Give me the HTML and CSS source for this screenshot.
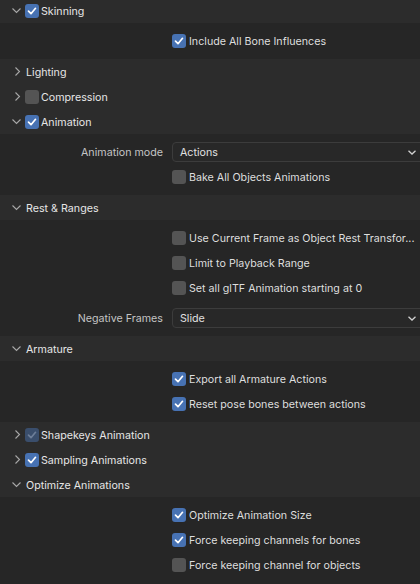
FILE: index.html
```html
<!DOCTYPE html>
<html>
<head>
<meta charset="utf-8">
<link rel="stylesheet" href="styles.css">
</head>
<body>
<div class="panel">
  <div class="hdr">
    <svg class="chev" width="14" height="25"><path d="M1.5 10.5 L5.5 14.5 L9.5 10.5"/></svg>
    <span class="cb on"><svg width="14" height="14"><path d="M3.5 7.2 L6 9.7 L10.5 4.3"/></svg></span>
    <span class="ht">Skinning</span>
  </div>
  <div class="body">
    <div class="row"><div class="lab"></div><label class="opt"><span class="cb on"><svg width="14" height="14"><path d="M3.5 7.2 L6 9.7 L10.5 4.3"/></svg></span>Include All Bone Influences</label></div>
  </div>

  <div class="hdr closed">
    <svg class="chev" width="14" height="25"><path d="M4.5 8.5 L8.5 12.5 L4.5 16.5"/></svg>
    <span class="ht plain">Lighting</span>
  </div>
  <div class="hdr closed">
    <svg class="chev" width="14" height="25"><path d="M4.5 8.5 L8.5 12.5 L4.5 16.5"/></svg>
    <span class="cb"></span>
    <span class="ht">Compression</span>
  </div>

  <div class="hdr">
    <svg class="chev" width="14" height="25"><path d="M1.5 10.5 L5.5 14.5 L9.5 10.5"/></svg>
    <span class="cb on"><svg width="14" height="14"><path d="M3.5 7.2 L6 9.7 L10.5 4.3"/></svg></span>
    <span class="ht">Animation</span>
  </div>
  <div class="body">
    <div class="row"><div class="lab">Animation mode</div><div class="drop"><span>Actions</span><svg width="8" height="5"><path d="M0.5 0.8 L4 4 L7.5 0.8"/></svg></div></div>
    <div class="row"><div class="lab"></div><label class="opt"><span class="cb"></span>Bake All Objects Animations</label></div>
  </div>

  <div class="hdr">
    <svg class="chev" width="14" height="25"><path d="M1.5 10.5 L5.5 14.5 L9.5 10.5"/></svg>
    <span class="ht plain">Rest &amp; Ranges</span>
  </div>
  <div class="body">
    <div class="row"><div class="lab"></div><label class="opt"><span class="cb"></span>Use Current Frame as Object Rest Transfor...</label></div>
    <div class="row"><div class="lab"></div><label class="opt"><span class="cb"></span>Limit to Playback Range</label></div>
    <div class="row"><div class="lab"></div><label class="opt"><span class="cb"></span>Set all glTF Animation starting at 0</label></div>
    <div class="row sep"><div class="lab">Negative Frames</div><div class="drop"><span>Slide</span><svg width="8" height="5"><path d="M0.5 0.8 L4 4 L7.5 0.8"/></svg></div></div>
  </div>

  <div class="hdr">
    <svg class="chev" width="14" height="25"><path d="M1.5 10.5 L5.5 14.5 L9.5 10.5"/></svg>
    <span class="ht plain">Armature</span>
  </div>
  <div class="body">
    <div class="row"><div class="lab"></div><label class="opt"><span class="cb on"><svg width="14" height="14"><path d="M3.5 7.2 L6 9.7 L10.5 4.3"/></svg></span>Export all Armature Actions</label></div>
    <div class="row"><div class="lab"></div><label class="opt"><span class="cb on"><svg width="14" height="14"><path d="M3.5 7.2 L6 9.7 L10.5 4.3"/></svg></span>Reset pose bones between actions</label></div>
  </div>

  <div class="hdr closed">
    <svg class="chev" width="14" height="25"><path d="M4.5 8.5 L8.5 12.5 L4.5 16.5"/></svg>
    <span class="cb on dim"><svg width="14" height="14"><path d="M3.5 7.2 L6 9.7 L10.5 4.3"/></svg></span>
    <span class="ht">Shapekeys Animation</span>
  </div>
  <div class="hdr closed">
    <svg class="chev" width="14" height="25"><path d="M4.5 8.5 L8.5 12.5 L4.5 16.5"/></svg>
    <span class="cb on"><svg width="14" height="14"><path d="M3.5 7.2 L6 9.7 L10.5 4.3"/></svg></span>
    <span class="ht">Sampling Animations</span>
  </div>
  <div class="hdr">
    <svg class="chev" width="14" height="25"><path d="M1.5 10.5 L5.5 14.5 L9.5 10.5"/></svg>
    <span class="ht plain">Optimize Animations</span>
  </div>
  <div class="body">
    <div class="row"><div class="lab"></div><label class="opt"><span class="cb on"><svg width="14" height="14"><path d="M3.5 7.2 L6 9.7 L10.5 4.3"/></svg></span>Optimize Animation Size</label></div>
    <div class="row"><div class="lab"></div><label class="opt"><span class="cb on"><svg width="14" height="14"><path d="M3.5 7.2 L6 9.7 L10.5 4.3"/></svg></span>Force keeping channels for bones</label></div>
    <div class="row"><div class="lab"></div><label class="opt"><span class="cb"></span>Force keeping channel for objects</label></div>
  </div>
</div>
</body>
</html>
```

FILE: styles.css
```css
html, body {
  margin: 0;
  padding: 0;
  background: #262626;
  overflow: hidden;
}
body {
  width: 420px;
  height: 584px;
  font-family: "Inter", "DejaVu Sans", sans-serif;
  font-size: 10.7px;
}
.panel {
  margin-top: -2px;
  display: flex;
  flex-direction: column;
}
.hdr {
  height: 25px;
  background: #2c2c2c;
  display: flex;
  align-items: center;
  padding-left: 11px;
  color: #e6e6e6;
}
.chev {
  flex: none;
  align-self: stretch;
  height: 25px;
}
.chev path {
  fill: none;
  stroke: #a8a8a8;
  stroke-width: 1.1;
}
.ht {
  margin-left: 2px;
  padding-top: 2px;
}
.ht.plain {
  margin-left: 1px;
}
.cb {
  flex: none;
  width: 14px;
  height: 14px;
  border-radius: 3px;
  background: #545454;
  box-sizing: border-box;
  display: inline-block;
}
.cb svg {
  display: block;
}
.cb path {
  fill: none;
  stroke: #ffffff;
  stroke-width: 1.7;
  stroke-linecap: round;
  stroke-linejoin: round;
}
.cb.on {
  background: #4772b3;
}
.cb.dim {
  background: #3a4e6c;
}
.cb.dim path {
  stroke: #6d7e98;
}
.body {
  background: #262626;
  padding: 8px 0;
  display: flex;
  flex-direction: column;
  gap: 5px;
}
.row {
  height: 20px;
  display: grid;
  grid-template-columns: 172px 1fr;
  align-items: center;
}
.row.sep {
  margin-top: 5px;
}
.lab {
  text-align: right;
  padding-right: 9px;
  color: #c4c4c4;
  white-space: nowrap;
}
.opt {
  display: flex;
  align-items: center;
  color: #dedede;
  white-space: nowrap;
  gap: 3px;
}
.drop {
  height: 20px;
  box-sizing: border-box;
  margin-right: -6px;
  border: 1px solid #3c3c3c;
  border-radius: 4px;
  background: #282828;
  display: flex;
  align-items: center;
  justify-content: space-between;
  padding: 0 9px 0 7px;
  color: #e0e0e0;
}
.drop path {
  fill: none;
  stroke: #d0d0d0;
  stroke-width: 1.3;
}
```
